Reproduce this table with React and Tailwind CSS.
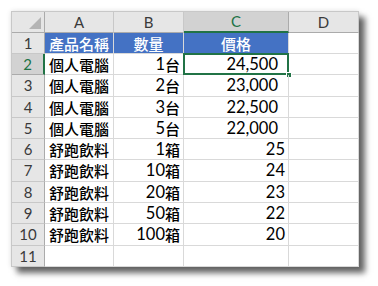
const rows = [
  ["個人電腦", "1", "台", "24,500", true],
  ["個人電腦", "2", "台", "23,000", true],
  ["個人電腦", "3", "台", "22,500", true],
  ["個人電腦", "5", "台", "22,000", true],
  ["舒跑飲料", "1", "箱", "25", false],
  ["舒跑飲料", "10", "箱", "24", false],
  ["舒跑飲料", "20", "箱", "23", false],
  ["舒跑飲料", "50", "箱", "22", false],
  ["舒跑飲料", "100", "箱", "20", false],
]

const cjk = "text-[15px] font-medium [font-family:'Noto_Sans_CJK_TC',sans-serif]"
const heights = ["h-[21px]", "h-[21px]", "h-[22px]", "h-[21px]", "h-[21px]", "h-[21px]", "h-[22px]", "h-[21px]", "h-[21px]", "h-[22px]", "h-[21px]"]

function RowHead({ n, active, h }) {
  return (
    <div
      className={`${h} w-[33px] shrink-0 flex items-center justify-center border-b border-r text-[15px] ${
        active
          ? "bg-[#d2d2d2] border-b-[#ababab] border-r-2 border-r-[#217346] text-[#217346]"
          : "bg-[#e6e6e6] border-b-[#c8c8c8] border-r-[#ababab] text-[#3a3a3a]"
      }`}
    >
      {n}
    </div>
  )
}

function Cell({ w, className = "", children }) {
  return (
    <div className={`${w} shrink-0 h-full flex items-center border-b border-r border-[#d9d9d9] ${className}`}>
      {children}
    </div>
  )
}

export default function App() {
  return (
    <div className="w-[378px] h-[286px] bg-white pl-[11px] pt-[11px] [font-family:Lato,'Noto_Sans_CJK_TC',sans-serif] text-[16.5px] text-black leading-none">
      <div className="w-[348px] border-l border-t border-[#c8c8c8] bg-white shadow-[6px_6px_6px_rgba(0,0,0,0.6),0_0_5px_rgba(0,0,0,0.12)]">
        {/* column headers */}
        <div className="flex h-[21px] text-[15px] text-[#3a3a3a]">
          <div className="w-[33px] shrink-0 bg-[#e6e6e6] border-r border-b border-[#ababab] relative">
            <div className="absolute right-[3px] bottom-[3px] w-0 h-0 border-l-[12px] border-l-transparent border-b-[12px] border-b-[#b4b4b4]" />
          </div>
          <div className="w-[69px] shrink-0 bg-[#e6e6e6] border-r border-b border-r-[#c8c8c8] border-b-[#ababab] flex items-center justify-center">A</div>
          <div className="w-[70px] shrink-0 bg-[#e6e6e6] border-r border-b border-r-[#c8c8c8] border-b-[#ababab] flex items-center justify-center">B</div>
          <div className="w-[105px] shrink-0 bg-[#d2d2d2] border-r border-r-[#ababab] border-b-2 border-b-[#217346] text-[#217346] flex items-center justify-center">C</div>
          <div className="w-[70px] shrink-0 bg-[#e6e6e6] border-r border-b border-r-[#c8c8c8] border-b-[#ababab] flex items-center justify-center">D</div>
        </div>

        {/* row 1 */}
        <div className={`flex ${heights[0]}`}>
          <RowHead n={1} h={heights[0]} />
          <div className="flex h-full bg-[#4472c4] text-white">
            <Cell w="w-[69px]" className="justify-center border-[#4472c4] border-b-[#d9d9d9]"><span className={cjk}>產品名稱</span></Cell>
            <Cell w="w-[70px]" className="justify-center border-[#4472c4] border-b-[#d9d9d9]"><span className={cjk}>數量</span></Cell>
            <Cell w="w-[105px]" className="justify-center border-r-[#d9d9d9] border-b-[#217346]"><span className={cjk}>價格</span></Cell>
          </div>
          <Cell w="w-[70px]" />
        </div>

        {rows.map(([name, qty, unit, price, pad], i) => {
          const h = heights[i + 1]
          const active = i === 0
          return (
            <div key={i} className={`flex ${h}`}>
              <RowHead n={i + 2} active={active} h={h} />
              <Cell w="w-[69px]" className="pl-[4px]"><span className={cjk}>{name}</span></Cell>
              <Cell w="w-[70px]" className="justify-end pr-[3px]">
                <span>{qty}</span>
                <span className={cjk}>{unit}</span>
              </Cell>
              <Cell
                w="w-[105px]"
                className={`justify-end relative ${pad ? "pr-[10px]" : "pr-[3px]"}`}
              >
                {price}
                {active && (
                  <>
                    <div className="absolute -left-px -top-px w-[106px] h-[22px] border-2 border-[#217346]" />
                    <div className="absolute right-[-4px] bottom-[-4px] w-[6px] h-[6px] bg-[#217346] border border-white" />
                  </>
                )}
              </Cell>
              <Cell w="w-[70px]" />
            </div>
          )
        })}

        {/* row 11 */}
        <div className={`flex ${heights[10]}`}>
          <RowHead n={11} h={heights[10]} />
          <Cell w="w-[69px]" />
          <Cell w="w-[70px]" />
          <Cell w="w-[105px]" />
          <Cell w="w-[70px]" />
        </div>
      </div>
    </div>
  )
}
